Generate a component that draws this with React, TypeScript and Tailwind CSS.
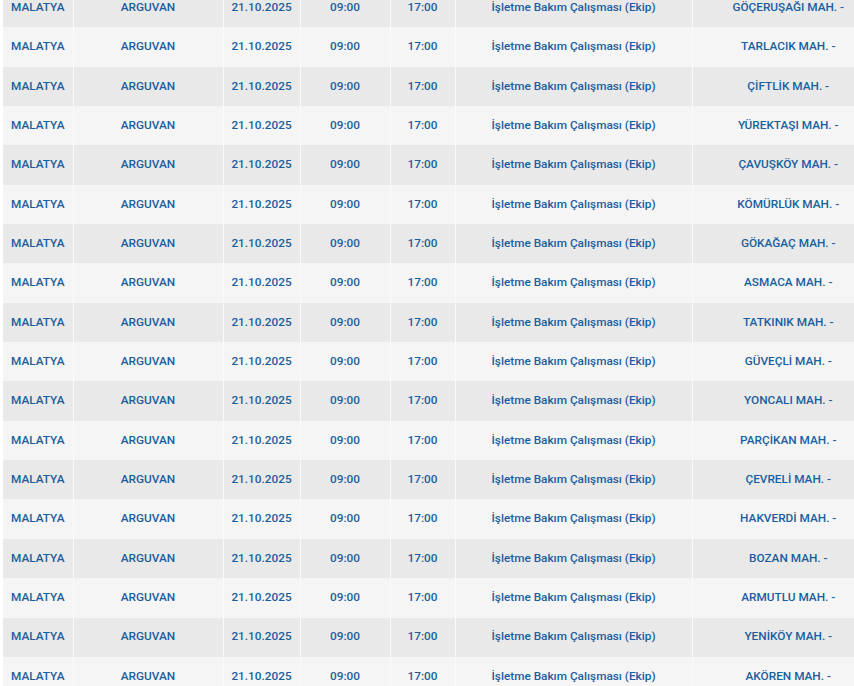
const mahalleler = [
  'GÖÇERUŞAĞI MAH. -',
  'TARLACIK MAH. -',
  'ÇİFTLİK MAH. -',
  'YÜREKTAŞI MAH. -',
  'ÇAVUŞKÖY MAH. -',
  'KÖMÜRLÜK MAH. -',
  'GÖKAĞAÇ MAH. -',
  'ASMACA MAH. -',
  'TATKINIK MAH. -',
  'GÜVEÇLİ MAH. -',
  'YONCALI MAH. -',
  'PARÇİKAN MAH. -',
  'ÇEVRELİ MAH. -',
  'HAKVERDİ MAH. -',
  'BOZAN MAH. -',
  'ARMUTLU MAH. -',
  'YENİKÖY MAH. -',
  'AKÖREN MAH. -',
]

const cell = 'border-r border-[#fafafa] text-center align-middle p-0'

export default function App() {
  return (
    <div className="w-[854px] h-[686px] overflow-hidden bg-white pl-[3px]">
      <table
        className="-mt-[12px] w-[881px] table-fixed border-collapse text-[11.8px] font-medium text-[#1a5e9f]"
        style={{ fontFamily: 'Roboto, "Liberation Sans", sans-serif' }}
      >
        <colgroup>
          <col className="w-[70px]" />
          <col className="w-[150px]" />
          <col className="w-[77px]" />
          <col className="w-[90px]" />
          <col className="w-[65px]" />
          <col className="w-[237px]" />
          <col className="w-[192px]" />
        </colgroup>
        <tbody>
          {mahalleler.map((m, i) => (
            <tr key={m} className={`h-[39.35px] ${i % 2 === 0 ? 'bg-[#e9e9e9]' : 'bg-[#f5f5f5]'}`}>
              <td className={cell}>MALATYA</td>
              <td className={cell}>ARGUVAN</td>
              <td className={cell}>21.10.2025</td>
              <td className={cell}>09:00</td>
              <td className={cell}>17:00</td>
              <td className={cell}>İşletme Bakım Çalışması (Ekip)</td>
              <td className="text-center align-middle p-0">{m}</td>
            </tr>
          ))}
        </tbody>
      </table>
    </div>
  )
}
